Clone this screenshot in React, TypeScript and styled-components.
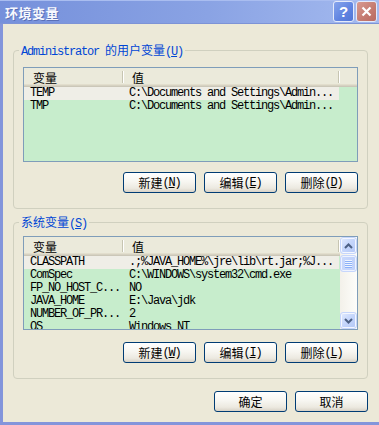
import styled, { createGlobalStyle } from "styled-components";

const GlobalStyle = createGlobalStyle`
  html, body {
    margin: 0;
    padding: 0;
    background: #ece9d8;
  }
  body {
    font-family: "Noto Sans CJK SC", sans-serif;
  }
`;

type EnvVar = { name: string; value: string };

const userVars: EnvVar[] = [
  { name: "TEMP", value: "C:\\Documents and Settings\\Admin..." },
  { name: "TMP", value: "C:\\Documents and Settings\\Admin..." },
];

const systemVars: EnvVar[] = [
  { name: "CLASSPATH", value: ".;%JAVA_HOME%\\jre\\lib\\rt.jar;%J..." },
  { name: "ComSpec", value: "C:\\WINDOWS\\system32\\cmd.exe" },
  { name: "FP_NO_HOST_C...", value: "NO" },
  { name: "JAVA_HOME", value: "E:\\Java\\jdk" },
  { name: "NUMBER_OF_PR...", value: "2" },
  { name: "OS", value: "Windows_NT" },
];

const Mnemonic = ({ k }: { k: string }) => (
  <Mono>
    (<u>{k}</u>)
  </Mono>
);

const VarList = ({
  rows,
  height,
  scroll,
}: {
  rows: EnvVar[];
  height: number;
  scroll?: boolean;
}) => (
  <ListView $height={height}>
    <ListMain>
      <Header>
        <HeaderCell $w={99}>变量</HeaderCell>
        <HeaderCell $w={216}>值</HeaderCell>
      </Header>
      {rows.map((r, i) => (
        <Row key={r.name} $selected={i === 0}>
          <Cell>{r.name}</Cell>
          <Cell>{r.value}</Cell>
        </Row>
      ))}
    </ListMain>
    {scroll && (
      <ScrollBar>
        <ScrollButton>
          <svg width="9" height="6" viewBox="0 0 9 6">
            <polyline points="1,5 4.5,1.5 8,5" fill="none" stroke="#4d6185" strokeWidth="2" />
          </svg>
        </ScrollButton>
        <Thumb>
          <Grip />
          <Grip />
          <Grip />
          <Grip />
        </Thumb>
        <Track />
        <ScrollButton>
          <svg width="9" height="6" viewBox="0 0 9 6">
            <polyline points="1,1 4.5,4.5 8,1" fill="none" stroke="#4d6185" strokeWidth="2" />
          </svg>
        </ScrollButton>
      </ScrollBar>
    )}
  </ListView>
);

const App = () => {
  return (
    <Window>
      <GlobalStyle />
      <TitleBar>
        <Title>环境变量</Title>
        <Caption>
          <CaptionButton $close={false}>?</CaptionButton>
          <CaptionButton $close>
            <svg width="11" height="11" viewBox="0 0 11 11">
              <path d="M1.5 1.5 L9.5 9.5 M9.5 1.5 L1.5 9.5" stroke="#fff" strokeWidth="2.2" />
            </svg>
          </CaptionButton>
        </Caption>
      </TitleBar>

      <Body>
        <Group $top={26} $padTop={16}>
          <Legend>
            <Mono>Administrator </Mono>的用户变量<Mnemonic k="U" />
          </Legend>
          <VarList rows={userVars} height={95} />
          <ButtonRow $gap={10}>
            <Button>新建<Mnemonic k="N" /></Button>
            <Button>编辑<Mnemonic k="E" /></Button>
            <Button>删除<Mnemonic k="D" /></Button>
          </ButtonRow>
        </Group>

        <Group $top={13} $padTop={13}>
          <Legend>
            系统变量<Mnemonic k="S" />
          </Legend>
          <VarList rows={systemVars} height={94} scroll />
          <ButtonRow $gap={12}>
            <Button>新建<Mnemonic k="W" /></Button>
            <Button>编辑<Mnemonic k="I" /></Button>
            <Button>删除<Mnemonic k="L" /></Button>
          </ButtonRow>
        </Group>

        <Footer>
          <Button>确定</Button>
          <Button>取消</Button>
        </Footer>
      </Body>
    </Window>
  );
};

export default App;

const Window = styled.div`
  width: 379px;
  height: 425px;
  display: flex;
  flex-direction: column;
  overflow: hidden;
  background: #ece9d8;
`;

const TitleBar = styled.div`
  height: 24px;
  flex: none;
  display: flex;
  align-items: center;
  justify-content: space-between;
  padding: 0 2px 0 5px;
  background: linear-gradient(90deg, #7590db 0%, #8aa3e4 55%, #a4baef 100%);
  box-shadow: inset 0 1px 0 #a9bdf0, inset 0 -1px 0 #7d93d6;
`;

const Title = styled.div`
  font-family: "Noto Sans CJK SC", sans-serif;
  font-weight: 700;
  font-size: 13px;
  color: #f6f8fe;
  letter-spacing: 0.5px;
  text-shadow: 1px 1px 0 #5a70b8;
`;

const Caption = styled.div`
  display: flex;
  gap: 2px;
  margin-top: -1px;
`;

const CaptionButton = styled.div<{ $close: boolean }>`
  width: 21px;
  height: 21px;
  box-sizing: border-box;
  display: flex;
  align-items: center;
  justify-content: center;
  border: 1px solid #e4eafa;
  border-radius: 3px;
  background: ${(p) =>
    p.$close
      ? "linear-gradient(135deg, #d89a90 0%, #c47a70 60%, #b86a62 100%)"
      : "linear-gradient(135deg, #86a4ec 0%, #5f83e0 60%, #5275d6 100%)"};
  color: #fff;
  font-family: "Liberation Sans", sans-serif;
  font-weight: 700;
  font-size: 15px;
  line-height: 1;
`;

const Body = styled.div`
  flex: 1;
  display: flex;
  flex-direction: column;
  padding: 0 11px 0 10px;
  border-left: 3px solid #8395db;
  border-bottom: 3px solid #8395db;
`;

const Group = styled.div<{ $top: number; $padTop: number }>`
  position: relative;
  margin-top: ${(p) => p.$top}px;
  padding: ${(p) => p.$padTop}px 9px 15px;
  border: 1px solid #d0d0bf;
  border-radius: 4px;
  display: flex;
  flex-direction: column;
`;

const Legend = styled.div`
  position: absolute;
  top: -8px;
  left: 5px;
  padding: 0 2px;
  background: #ece9d8;
  color: #0046d5;
  font-size: 12px;
  line-height: 14px;
  white-space: nowrap;
`;

const Mono = styled.span`
  font-family: "Liberation Mono", monospace;
  font-size: 12px;
  letter-spacing: -1.2px;
`;

const ListView = styled.div<{ $height: number }>`
  height: ${(p) => p.$height}px;
  box-sizing: border-box;
  border: 1px solid #7f9db9;
  background: #c7edcc;
  display: flex;
  overflow: hidden;
`;

const ListMain = styled.div`
  flex: 1;
  min-width: 0;
  overflow: hidden;
`;

const Header = styled.div`
  height: 19px;
  display: flex;
  background: #ebeadb;
  box-shadow: inset 0 -1px 0 #cbc7b8, inset 0 -2px 0 #d6d2c2, inset 0 -3px 0 #e2decd;
`;

const HeaderCell = styled.div<{ $w: number }>`
  position: relative;
  width: ${(p) => p.$w}px;
  flex: none;
  box-sizing: border-box;
  padding-left: 9px;
  font-size: 12px;
  line-height: 19px;
  color: #000;

  &::after {
    content: "";
    position: absolute;
    right: 0;
    top: 3px;
    bottom: 4px;
    width: 1px;
    background: #c7c5b2;
    box-shadow: 1px 0 0 #fff;
  }
`;

const Row = styled.div<{ $selected: boolean }>`
  display: grid;
  grid-template-columns: 99px 216px;
  width: 315px;
  height: 13px;
  background: ${(p) => (p.$selected ? "#efeee7" : "transparent")};
`;

const Cell = styled.div`
  padding-left: 6px;
  font-family: "Liberation Mono", monospace;
  font-size: 12px;
  letter-spacing: -1.2px;
  line-height: 13px;
  color: #000;
  white-space: nowrap;
  overflow: hidden;
`;

const ScrollBar = styled.div`
  width: 17px;
  flex: none;
  display: flex;
  flex-direction: column;
  background: linear-gradient(90deg, #f3f1ea 0%, #fdfdfa 100%);
`;

const ScrollButton = styled.div`
  height: 17px;
  flex: none;
  box-sizing: border-box;
  display: flex;
  align-items: center;
  justify-content: center;
  border: 1px solid #c6d6fc;
  border-radius: 3px;
  background: linear-gradient(135deg, #e2ebfe 0%, #c4d5fb 50%, #b4c8f6 100%);
  box-shadow: inset 0 0 0 1px #f4f7fe;
`;

const Thumb = styled.div`
  height: 17px;
  flex: none;
  box-sizing: border-box;
  display: flex;
  flex-direction: column;
  align-items: center;
  justify-content: center;
  gap: 1px;
  margin-top: 1px;
  border: 1px solid #c6d6fc;
  border-radius: 3px;
  background: linear-gradient(90deg, #c9d8fc 0%, #bfd1fa 100%);
  box-shadow: inset 0 0 0 1px #eef3fe;
`;

const Grip = styled.div`
  width: 7px;
  height: 1px;
  background: #eef4fe;
  box-shadow: 0 1px 0 #8cb0f8;
`;

const Track = styled.div`
  flex: 1;
`;

const ButtonRow = styled.div<{ $gap: number }>`
  display: flex;
  justify-content: flex-end;
  gap: 8px;
  margin-top: ${(p) => p.$gap}px;
`;

const Footer = styled.div`
  display: flex;
  justify-content: flex-end;
  gap: 8px;
  margin-top: 12px;
`;

const Button = styled.div`
  width: 73px;
  height: 21px;
  box-sizing: border-box;
  display: flex;
  align-items: center;
  justify-content: center;
  border: 1px solid #003c74;
  border-radius: 3px;
  background: linear-gradient(180deg, #ffffff 0%, #f7f6f1 45%, #ece9e0 80%, #d8d2c6 100%);
  font-family: "Noto Sans CJK SC", sans-serif;
  font-size: 12px;
  color: #000;
  white-space: nowrap;
`;
